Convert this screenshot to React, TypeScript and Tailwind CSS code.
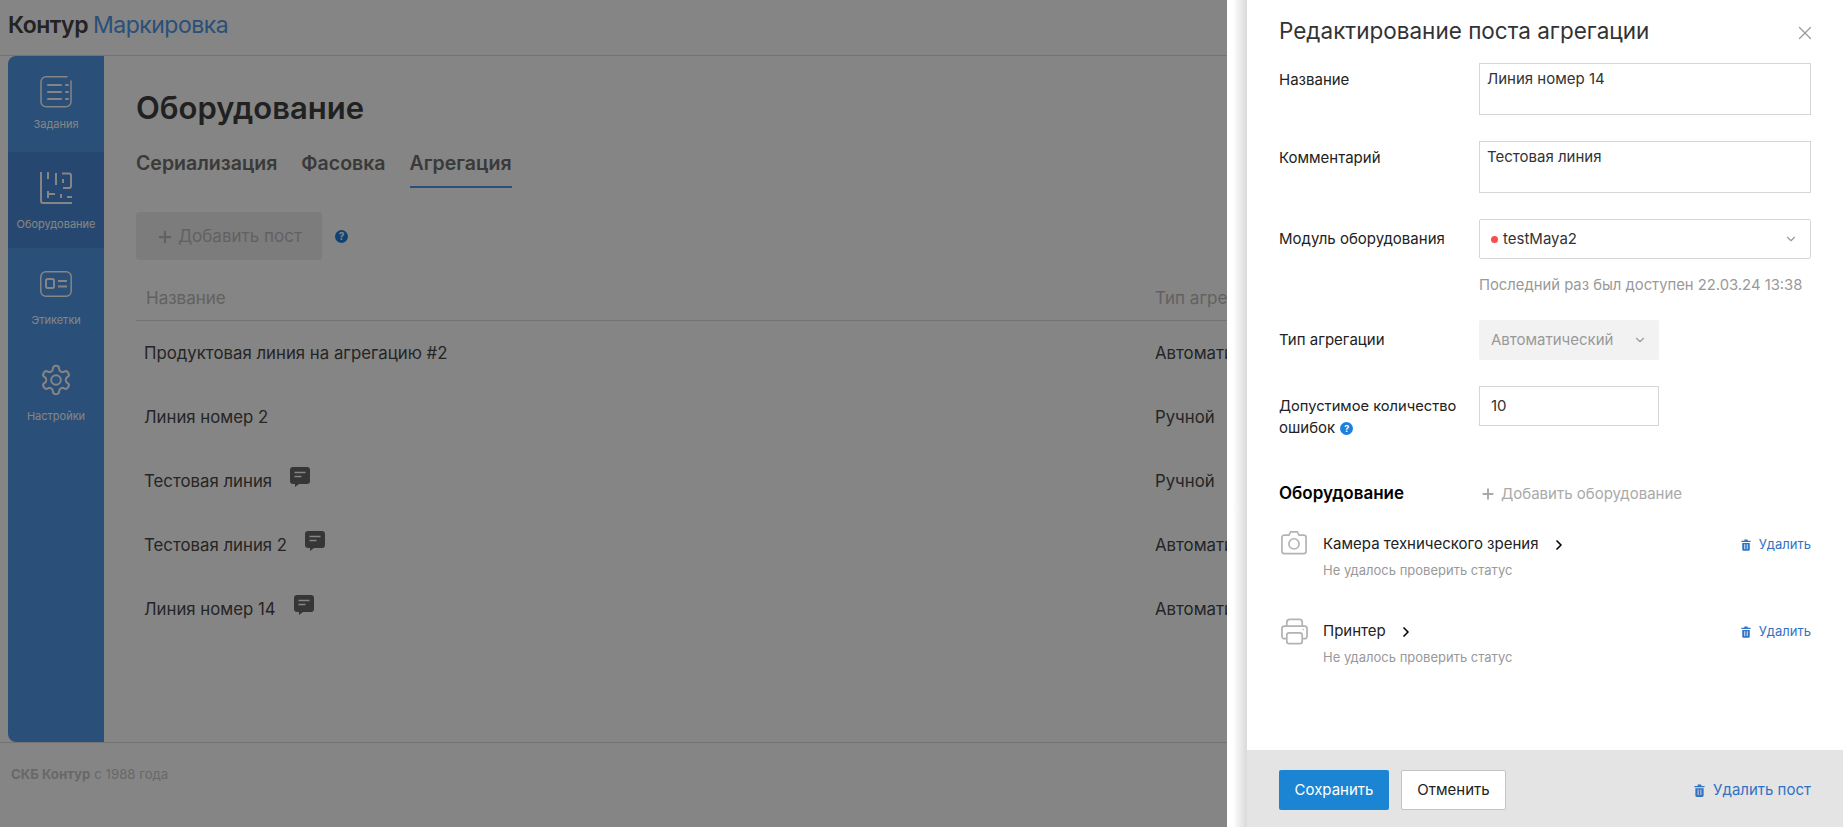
import { ChevronDown, ChevronRight, Plus, X } from "lucide-react";

const font = "font-['Inter','Liberation_Sans',sans-serif]";

function TasksIcon() {
  return (
    <svg width="32" height="32" viewBox="0 0 32 32" fill="none" stroke="currentColor" strokeWidth="1.5" strokeLinecap="round">
      <path d="M27 0.8H6a5 5 0 0 0-5 5v20a5 5 0 0 0 5 5h20a5 5 0 0 0 5-5V5" />
      <path d="M8 9h13M8 16h13M8 23h13M26 9h2M26 16h2M26 23h2" strokeWidth="2" />
    </svg>
  );
}

function CodeIcon() {
  return (
    <svg width="32" height="32" viewBox="0 0 32 32" fill="none" stroke="currentColor" strokeWidth="2">
      <path d="M1 0V29a2 2 0 0 0 2 2H32" />
      <path d="M8 0V7M16 1V13M22 1.500H29a2 2 0 0 1 2 2V14a2 2 0 0 1-2 2H23M23 7V11M8 19V26M8 22H15M21 22V26M27 25H32" />
    </svg>
  );
}

function LabelIcon() {
  return (
    <svg width="32" height="26" viewBox="0 0 32 26" fill="none" stroke="currentColor" strokeWidth="1.5">
      <rect x="0.800" y="0.800" width="30.400" height="24.400" rx="5" />
      <rect x="6" y="8" width="8" height="9" rx="1.500" strokeWidth="2" />
      <path d="M18 10h9M18 15.500h9" strokeWidth="2" />
    </svg>
  );
}

function GearIcon() {
  return (
    <svg width="34" height="34" viewBox="0 0 24 24" fill="none" stroke="currentColor" strokeWidth="1.400">
      <path d="M12.220 2h-.440a2 2 0 0 0-2 2v.180a2 2 0 0 1-1 1.730l-.430.250a2 2 0 0 1-2 0l-.150-.080a2 2 0 0 0-2.730.730l-.220.380a2 2 0 0 0 .730 2.730l.150.100a2 2 0 0 1 1 1.720v.510a2 2 0 0 1-1 1.740l-.150.090a2 2 0 0 0-.730 2.730l.220.380a2 2 0 0 0 2.730.730l.150-.080a2 2 0 0 1 2 0l.430.250a2 2 0 0 1 1 1.730V20a2 2 0 0 0 2 2h.440a2 2 0 0 0 2-2v-.180a2 2 0 0 1 1-1.730l.430-.250a2 2 0 0 1 2 0l.150.080a2 2 0 0 0 2.730-.730l.220-.390a2 2 0 0 0-.730-2.730l-.150-.080a2 2 0 0 1-1-1.740v-.500a2 2 0 0 1 1-1.740l.150-.090a2 2 0 0 0 .730-2.730l-.220-.380a2 2 0 0 0-2.730-.730l-.150.080a2 2 0 0 1-2 0l-.430-.250a2 2 0 0 1-1-1.730V4a2 2 0 0 0-2-2z" />
      <circle cx="12" cy="12" r="3.400" />
    </svg>
  );
}

function CommentIcon() {
  return (
    <svg width="20" height="20" viewBox="0 0 20 20">
      <path d="M3 0h14a3 3 0 0 1 3 3v11a3 3 0 0 1-3 3H9l-4 3v-3H3a3 3 0 0 1-3-3V3a3 3 0 0 1 3-3z" fill="#686868" />
      <path d="M4.500 5.500h11M4.500 9.500h7" stroke="#fff" strokeWidth="1.500" />
    </svg>
  );
}

function TrashIcon({ w, h, gap }: { w: number; h: number; gap: string }) {
  return (
    <svg width={w} height={h} viewBox="0 0 12 14" fill="#3072c4">
      <path d="M4 0.500h4v1.500h3.500v1.500H0.500V2H4z" />
      <path d="M1.500 4.500h9v8a1.500 1.500 0 0 1-1.500 1.500H3a1.500 1.500 0 0 1-1.500-1.500z" />
      <path d="M4.500 6v6M7.500 6v6" stroke={gap} strokeWidth="1" />
    </svg>
  );
}

function HelpDot({ size }: { size: string }) {
  return (
    <span className={`${size} inline-flex shrink-0 items-center justify-center rounded-full bg-[#1e7fdc] font-bold text-white`}>
      ?
    </span>
  );
}

function CameraIcon() {
  return (
    <svg width="26" height="25" viewBox="0 0 28 26" fill="none" stroke="#b3b3b3" strokeWidth="1.800">
      <path d="M3.500 5h5l2-3.500h7l2 3.500h5a2.500 2.500 0 0 1 2.500 2.500v15a2.500 2.500 0 0 1-2.500 2.500h-21A2.500 2.500 0 0 1 1 22.500v-15A2.500 2.500 0 0 1 3.500 5z" />
      <circle cx="14" cy="14.500" r="5.500" />
    </svg>
  );
}

function PrinterIcon() {
  return (
    <svg width="27" height="27" viewBox="0 0 28 27" fill="none" stroke="#b3b3b3" strokeWidth="1.800">
      <path d="M6 8V4a3 3 0 0 1 3-3h10a3 3 0 0 1 3 3v4" />
      <path d="M6 21H3.500A2.500 2.500 0 0 1 1 18.500v-8A2.500 2.500 0 0 1 3.500 8h21a2.500 2.500 0 0 1 2.500 2.500v8a2.500 2.500 0 0 1-2.500 2.500H22" />
      <rect x="6" y="15" width="16" height="11" rx="2.500" />
      <circle cx="23" cy="11.500" r="0.800" fill="#b3b3b3" stroke="none" />
    </svg>
  );
}

const navItems = [
  { label: "Задания", icon: <TasksIcon />, active: false, labelClass: "mt-[8px]" },
  { label: "Оборудование", icon: <CodeIcon />, active: true, labelClass: "mt-[12px]" },
  { label: "Этикетки", icon: <LabelIcon />, active: false, labelClass: "mt-[12px]" },
  { label: "Настройки", icon: <GearIcon />, active: false, labelClass: "mt-[12px]" },
];

const rows = [
  { name: "Продуктовая линия на агрегацию #2", type: "Автоматический", comment: false },
  { name: "Линия номер 2", type: "Ручной", comment: false },
  { name: "Тестовая линия", type: "Ручной", comment: true },
  { name: "Тестовая линия 2", type: "Автоматический", comment: true },
  { name: "Линия номер 14", type: "Автоматический", comment: true },
];

function Field({ label, children }: { label: React.ReactNode; children: React.ReactNode }) {
  return (
    <div className="flex">
      <div className="w-[200px] shrink-0 text-[15px] leading-[22px] text-[#222]">{label}</div>
      <div className="min-w-0 flex-1">{children}</div>
    </div>
  );
}

function Device({ icon, name, className, iconClass }: { icon: React.ReactNode; name: string; className: string; iconClass: string }) {
  return (
    <div className={`flex ${className}`}>
      <div className={`flex w-11 shrink-0 justify-start pl-0.5 ${iconClass}`}>{icon}</div>
      <div className="flex-1">
        <div className="flex h-6 items-center text-[15px] text-[#222]">
          {name}
          <ChevronRight size={16} strokeWidth={2.500} className="ml-3 text-black" />
        </div>
        <div className="mt-[3px] text-[13px] leading-5 text-[#999]">Не удалось проверить статус</div>
      </div>
      <button className="flex h-6 items-center gap-2 text-[13px] text-[#3072c4]">
        <TrashIcon w={10} h={12} gap="#fff" />
        Удалить
      </button>
    </div>
  );
}

export default function App() {
  return (
    <div className={`${font} relative flex h-screen flex-col overflow-hidden bg-white text-[#333]`}>
      <header className="flex h-14 shrink-0 items-center border-b border-[#ddd] pb-[5px] pl-2 text-[23px] tracking-[-0.5px]">
        <span className="font-semibold text-[#444]">Контур</span>
        <span className="ml-[5px] text-[#5197e6]">Маркировка</span>
      </header>

      <div className="flex min-h-0 flex-1">
        <nav className="ml-2 w-24 shrink-0 rounded-l-lg bg-[#5197e6] text-white">
          {navItems.map((item) => (
            <div
              key={item.label}
              className={`flex h-24 flex-col items-center pt-5 ${item.active ? "bg-[#4a8bd6]" : ""}`}
            >
              <div className="flex h-8 items-center justify-center">{item.icon}</div>
              <span className={`${item.labelClass} text-[11px] leading-4`}>{item.label}</span>
            </div>
          ))}
        </nav>

        <main className="flex-1 pl-8">
          <h1 className="mt-[31px] text-[31px] leading-[42px] font-semibold text-[#404040]">Оборудование</h1>
          <div className="mt-[20px] flex gap-6 text-[19.500px] font-semibold text-[#707070]">
            <span className="h-[39px] leading-7">Сериализация</span>
            <span className="h-[39px] leading-7">Фасовка</span>
            <span className="h-[39px] border-b-2 border-[#5197e6] leading-7">Агрегация</span>
          </div>
          <div className="mt-[24px] flex items-center gap-3">
            <button className="flex h-12 w-[186px] items-center justify-center gap-1 rounded bg-[#eeeeee] pt-px text-[17px] text-[#bbb]">
              <Plus size={18} strokeWidth={3} />
              Добавить пост
            </button>
            <HelpDot size="h-[13px] w-[13px] text-[10px] leading-none ml-[1px]" />
          </div>
          <div className="mt-[14px] grid h-[47px] grid-cols-[1019px_1fr] items-center border-b border-[#ddd] pt-1 text-[17px] text-[#bbb]">
            <span className="pl-2.5">Название</span>
            <span>Тип агрегации</span>
          </div>
          <div className="pt-px">
            {rows.map((row) => (
              <div key={row.name} className="grid h-16 grid-cols-[1019px_1fr] items-center text-[16.800px] text-[#484848]">
                <div className="flex items-center gap-[18px] pl-2">
                  {row.name}
                  {row.comment ? (
                    <span className="-mt-[10px]">
                      <CommentIcon />
                    </span>
                  ) : null}
                </div>
                <span>{row.type}</span>
              </div>
            ))}
          </div>
        </main>
      </div>

      <footer className="flex h-[85px] shrink-0 border-t border-[#ddd] pl-[11px] pt-[22px] text-[13.200px] text-[#c8c8c8]">
        <b className="font-bold">СКБ Контур</b>
        <span className="ml-1">с 1988 года</span>
      </footer>

      {/* затемнение под панелью */}
      <div className="absolute inset-0 bg-black/48" />

      <aside className="absolute top-0 right-0 bottom-0 flex w-[616px]">
        <div className="w-5 shrink-0 bg-gradient-to-r from-white from-30% to-[#d9d9d9]" />
        <div className="flex min-w-0 flex-1 flex-col bg-white">
          <div className="relative min-h-0 flex-1 pr-8 pl-8">
            <h2 className="pt-[15px] text-[22.500px] leading-8">Редактирование поста агрегации</h2>
            <X size={22} strokeWidth={1.300} className="absolute top-[22px] right-[27px] text-[#999]" />

            <div className="mt-[16px]">
              <Field label={<div className="pt-[6px]">Название</div>}>
                <div className="h-[52px] border border-[#d6d6d6] px-[7px] pt-[4px] text-[15px] leading-[22px]">Линия номер 14</div>
              </Field>
            </div>
            <div className="mt-[26px]">
              <Field label={<div className="pt-[6px]">Комментарий</div>}>
                <div className="h-[52px] border border-[#d6d6d6] px-[7px] pt-[4px] text-[15px] leading-[22px]">Тестовая линия</div>
              </Field>
            </div>
            <div className="mt-[26px]">
              <Field label={<div className="pt-[9px]">Модуль оборудования</div>}>
                <div className="flex h-10 items-center rounded-[2px] border border-[#d6d6d6] pr-3 pl-[11px] text-[15px]">
                  <span className="mr-[5px] h-[7px] w-[7px] rounded-full bg-[#fe4c4c]" />
                  testMaya2
                  <ChevronDown size={14} className="ml-auto text-[#999]" />
                </div>
                <div className="mt-[15px] text-[14.800px] leading-[22px] text-[#999]">Последний раз был доступен 22.03.24 13:38</div>
              </Field>
            </div>
            <div className="mt-[24px]">
              <Field label={<div className="pt-[9px]">Тип агрегации</div>}>
                <div className="flex h-10 w-[180px] items-center rounded-[2px] bg-[#f2f2f2] pr-3 pl-3 text-[15px] text-[#999]">
                  Автоматический
                  <ChevronDown size={14} className="ml-auto text-[#999]" />
                </div>
              </Field>
            </div>
            <div className="mt-[26px]">
              <Field
                label={
                  <div className="pt-[9px]">
                    <span className="text-[14.700px]">Допустимое количество</span>
                    <br />
                    <span className="inline-flex items-center gap-[5px]">
                      ошибок <HelpDot size="h-[13px] w-[13px] text-[9px] leading-none" />
                    </span>
                  </div>
                }
              >
                <div className="flex h-10 w-[180px] items-center border border-[#d6d6d6] pl-[11px] text-[15px]">10</div>
              </Field>
            </div>

            <div className="mt-[42px] flex items-center">
              <div className="w-[200px] text-[17px] font-semibold text-black">Оборудование</div>
              <div className="ml-[1px] flex items-center gap-[5px] text-[15px] text-[#aaa]">
                <Plus size={16} strokeWidth={3} />
                Добавить оборудование
              </div>
            </div>

            <Device icon={<CameraIcon />} name="Камера технического зрения" className="mt-[26px]" iconClass="-mt-[3px]" />
            <Device icon={<PrinterIcon />} name="Принтер" className="mt-[40px]" iconClass="-mt-[2px]" />
          </div>

          <div className="flex h-[77px] shrink-0 items-start gap-3 bg-[#e4e4e4] pt-5 pr-8 pl-8">
            <button className="h-10 w-[110px] rounded-[2px] bg-[#1c85d3] text-[15px] text-white">Сохранить</button>
            <button className="h-10 w-[105px] rounded-[2px] border border-[#c4c4c4] bg-white text-[15px] text-[#222]">Отменить</button>
            <button className="ml-auto flex h-10 items-center gap-2 text-[15px] text-[#3072c4]">
              <TrashIcon w={11} h={13} gap="#e4e4e4" />
              Удалить пост
            </button>
          </div>
        </div>
      </aside>
    </div>
  );
}
